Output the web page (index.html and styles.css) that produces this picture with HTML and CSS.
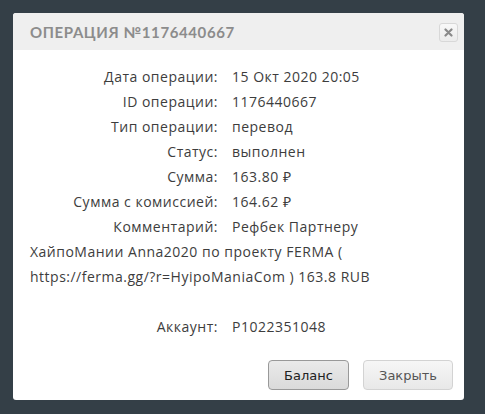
FILE: index.html
```html
<!DOCTYPE html>
<html lang="ru">
<head>
<meta charset="utf-8">
<title>Операция</title>
<link rel="stylesheet" href="styles.css">
</head>
<body>
<div class="dialog">
  <div class="titlebar">
    <span class="title">ОПЕРАЦИЯ №1176440667</span>
    <button class="close" aria-label="close">
      <svg width="9" height="9" viewBox="0 0 9 9"><path d="M1.5 1.5 L7.5 7.5 M7.5 1.5 L1.5 7.5" stroke="#8a8a8a" stroke-width="2.2" stroke-linecap="round"/></svg>
    </button>
  </div>
  <div class="content">
    <div class="row"><span class="label">Дата операции:</span>15 Окт 2020 20:05</div>
    <div class="row"><span class="label">ID операции:</span>1176440667</div>
    <div class="row"><span class="label">Тип операции:</span>перевод</div>
    <div class="row"><span class="label">Статус:</span>выполнен</div>
    <div class="row"><span class="label">Сумма:</span>163.80 ₽</div>
    <div class="row"><span class="label">Сумма с комиссией:</span>164.62 ₽</div>
    <div class="row"><span class="label">Комментарий:</span>Рефбек Партнеру ХайпоМании Anna2020 по проекту FERMA ( <span class="nowrap">https://ferma.gg/?r=HyipoManiaCom</span> ) 163.8 RUB</div>
    <div class="row empty"></div>
    <div class="row"><span class="label">Аккаунт:</span>P1022351048</div>
  </div>
  <div class="buttons">
    <button class="btn btn-active">Баланс</button>
    <button class="btn btn-close">Закрыть</button>
  </div>
</div>
</body>
</html>
```

FILE: styles.css
```css
html, body {
  margin: 0;
  padding: 0;
  height: 100%;
  background: #343f47;
  overflow: hidden;
}
.dialog {
  margin: 13px 0 0 13px;
  width: 451px;
  background: #fff;
  border-radius: 3px;
  overflow: hidden;
}
.titlebar {
  height: 37px;
  background: #efefef;
  display: flex;
  align-items: center;
  justify-content: space-between;
  padding: 0 6px 0 17px;
}
.title {
  font-family: "Lato", sans-serif;
  font-weight: 700;
  font-size: 15px;
  letter-spacing: 0.6px;
  color: #8c8c8c;
}
.close {
  width: 19px;
  height: 19px;
  padding: 0;
  margin-top: 1px;
  border: 1px solid #d8d8d8;
  border-radius: 3px;
  background: linear-gradient(#f8f8f8, #ececec);
  display: flex;
  align-items: center;
  justify-content: center;
}
.content {
  padding: 14px 16px 0 17px;
  font-family: "Open Sans", sans-serif;
  font-size: 14px;
  letter-spacing: 0.5px;
  line-height: 25px;
  color: #3d3d3d;
}
.nowrap {
  white-space: nowrap;
}
.row.empty {
  height: 25px;
}
.label {
  display: inline-block;
  width: 188px;
  margin-right: 14px;
  text-align: right;
}
.buttons {
  display: flex;
  justify-content: flex-end;
  gap: 14px;
  padding: 21px 11px 10px;
}
.btn {
  height: 30px;
  padding: 0;
  font-family: "DejaVu Sans", Verdana, sans-serif;
  font-size: 13px;
  color: #555;
  border: 1px solid #d3d3d3;
  border-radius: 4px;
  background: linear-gradient(#f6f6f6, #e8e8e8);
}
.btn-active {
  width: 81px;
  color: #212121;
  border-color: #999;
  background: linear-gradient(#eaeaea, #dadada);
}
.btn-close {
  width: 90px;
}
```
